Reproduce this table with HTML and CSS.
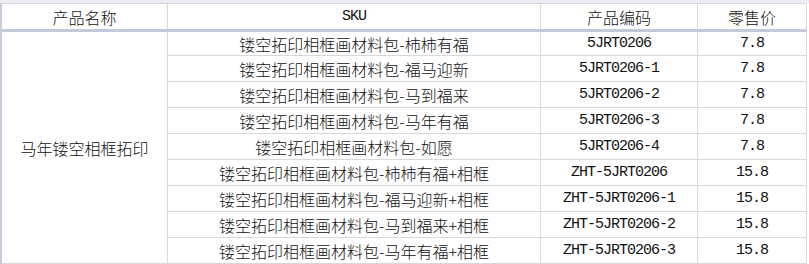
FILE: index.html
```html
<!DOCTYPE html>
<html lang="zh">
<head>
<meta charset="utf-8">
<title>产品表</title>
<link rel="stylesheet" href="styles.css">
</head>
<body>
<div class="topband"></div>
<div class="sheet">
  <div class="grid head">
    <div class="cell">产品名称</div>
    <div class="cell mono">SKU</div>
    <div class="cell">产品编码</div>
    <div class="cell">零售价</div>
  </div>
  <div class="grid body">
    <div class="cell name">马年镂空相框拓印</div>

    <div class="cell">镂空拓印相框画材料包-柿柿有福</div>
    <div class="cell mono">5JRT0206</div>
    <div class="cell mono">7.8</div>

    <div class="cell">镂空拓印相框画材料包-福马迎新</div>
    <div class="cell mono">5JRT0206-1</div>
    <div class="cell mono">7.8</div>

    <div class="cell">镂空拓印相框画材料包-马到福来</div>
    <div class="cell mono">5JRT0206-2</div>
    <div class="cell mono">7.8</div>

    <div class="cell">镂空拓印相框画材料包-马年有福</div>
    <div class="cell mono">5JRT0206-3</div>
    <div class="cell mono">7.8</div>

    <div class="cell">镂空拓印相框画材料包-如愿</div>
    <div class="cell mono">5JRT0206-4</div>
    <div class="cell mono">7.8</div>

    <div class="cell">镂空拓印相框画材料包-柿柿有福+相框</div>
    <div class="cell mono">ZHT-5JRT0206</div>
    <div class="cell mono">15.8</div>

    <div class="cell">镂空拓印相框画材料包-福马迎新+相框</div>
    <div class="cell mono">ZHT-5JRT0206-1</div>
    <div class="cell mono">15.8</div>

    <div class="cell">镂空拓印相框画材料包-马到福来+相框</div>
    <div class="cell mono">ZHT-5JRT0206-2</div>
    <div class="cell mono">15.8</div>

    <div class="cell">镂空拓印相框画材料包-马年有福+相框</div>
    <div class="cell mono">ZHT-5JRT0206-3</div>
    <div class="cell mono">15.8</div>
  </div>
</div>
</body>
</html>
```
FILE: styles.css
```css
html, body {
  margin: 0;
  padding: 0;
  background: #ffffff;
}

body {
  font-family: "Noto Sans CJK SC", "Noto Sans", sans-serif;
  font-size: 16px;
  font-weight: 300;
  color: #111111;
  overflow: hidden;
}

.topband {
  height: 3px;
  background: #eceef4;
}

.sheet {
  width: fit-content;
  border-left: 2px solid #c8ccda;
}

.grid {
  display: grid;
  grid-template-columns: 165px 372px 156px 108px;
  column-gap: 1px;
  background: #d6d8de;
  border-right: 1px solid #d6d8de;
}

.head {
  border-top: 1px solid #d6d8de;
  border-bottom: 3px solid #c4c9d7;
  grid-template-rows: 25px;
}

.body {
  grid-template-rows: 23px repeat(8, 25px);
  row-gap: 1px;
  border-bottom: 1px solid #d6d8de;
}

.cell {
  background: #ffffff;
  display: flex;
  align-items: center;
  justify-content: center;
  white-space: nowrap;
  line-height: 1;
}

.name {
  grid-row: 1 / span 9;
}

.mono {
  font-family: "Liberation Mono", "DejaVu Sans Mono", monospace;
  font-size: 15px;
  font-weight: 400;
  letter-spacing: -1px;
}
```
